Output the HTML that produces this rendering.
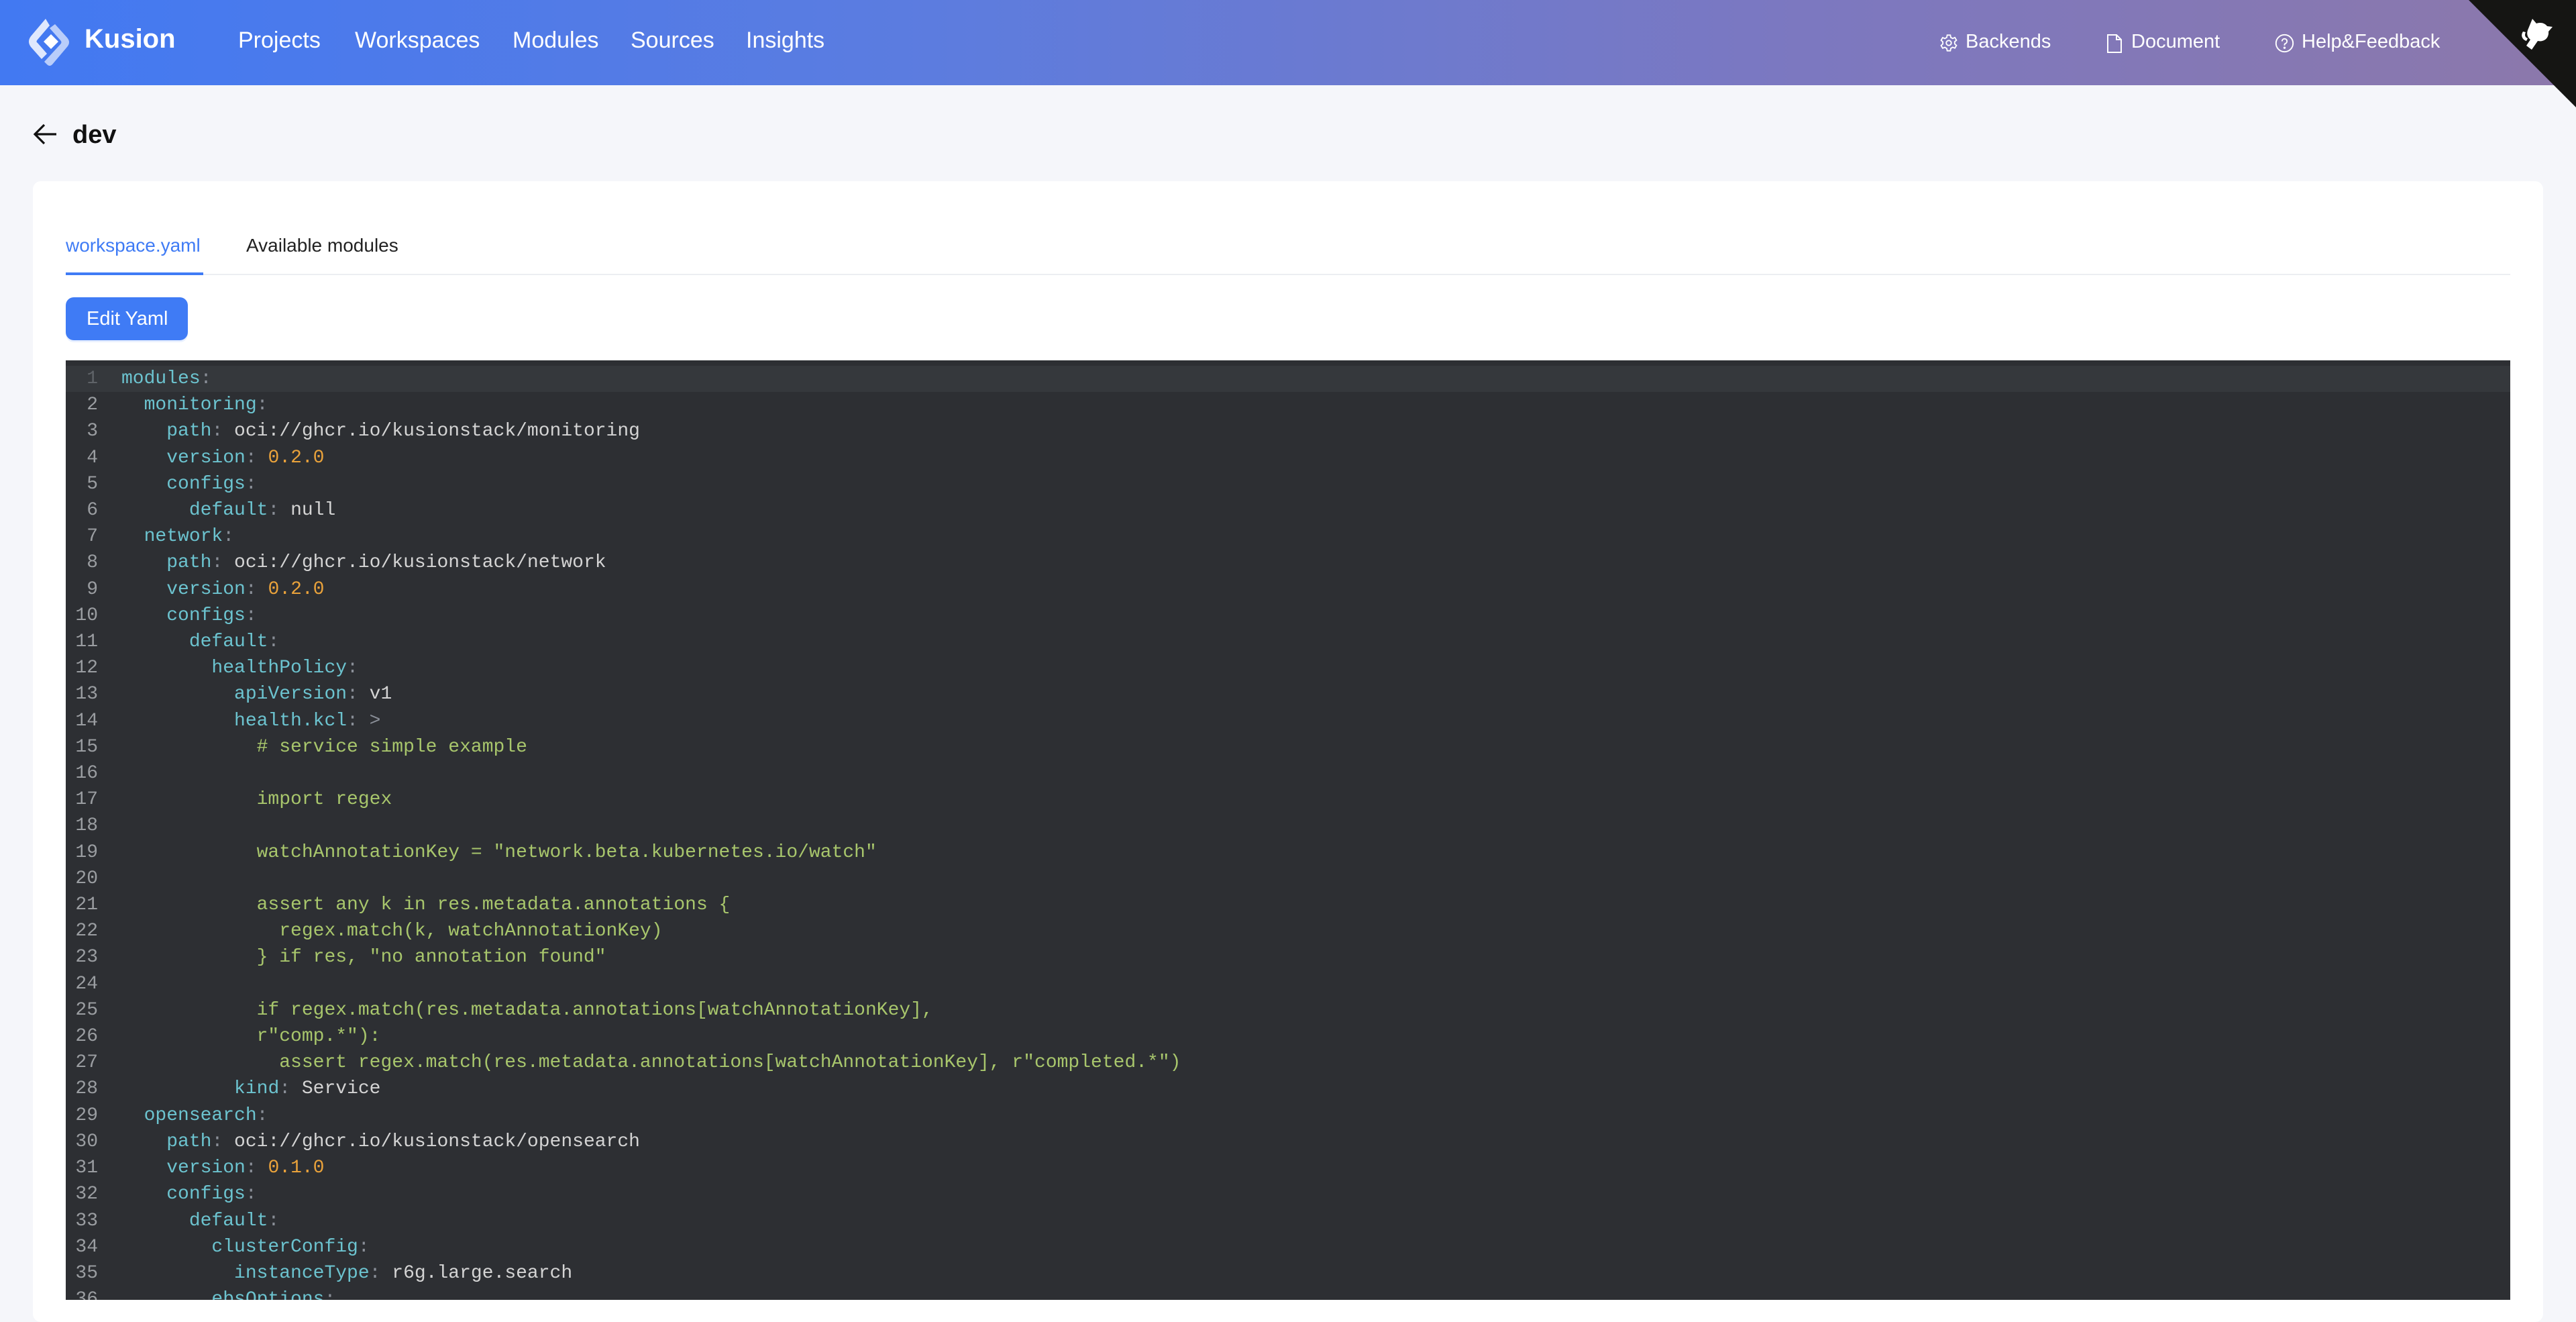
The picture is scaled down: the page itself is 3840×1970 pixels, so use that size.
<!DOCTYPE html>
<html><head><meta charset="utf-8"><style>
*{margin:0;padding:0;box-sizing:border-box}
body{width:3840px;height:1936px;overflow:hidden;background:#f5f6fa;font-family:"Liberation Sans",sans-serif;position:relative}
.hdr{position:absolute;left:0;top:0;width:3840px;height:127px;background:linear-gradient(90deg,#4279f2 0%,#5b7ce0 35%,#7c78c0 70%,#8c78ab 100%)}
.t{position:absolute;white-space:nowrap}
.nav{color:#fff;font-size:34px;top:41px}
.rn{color:#fff;font-size:29px;top:46px}
.gh{position:absolute;right:0;top:0;width:0;height:0;border-top:160px solid #151513;border-left:160px solid transparent}
.card{position:absolute;left:49px;top:270px;width:3742px;height:1700px;background:#fff;border-radius:12px}
.ed{position:absolute;left:98px;top:537px;width:3644px;height:1400px;background:#2d2f33;overflow:hidden}
.act{position:absolute;left:0;top:8px;width:100%;height:39px;background:#35383c}
.code{position:absolute;left:0;top:8px;font-family:"Liberation Mono",monospace;font-size:28px;line-height:39.2px;color:#d4d4d4;white-space:pre}
.ln{display:inline-block;width:48px;text-align:right;color:#9a9da1;margin-right:35px}
.k{color:#6cc3cf}.c{color:#8a8f98}.n{color:#e9a23b}.g{color:#a8c66c}
</style></head><body>
<div class="hdr"></div>
<svg style="position:absolute;left:38px;top:24px" width="76" height="78" viewBox="0 0 76 78">
<path d="M30 4 L8 30 Q2 38 8 46 L24 64 L32 56 L18 40 Q15 38 18 35 L36 14 Z" fill="#dfe8fd"/>
<path d="M44 12 L62 32 Q68 39 62 46 L40 72 Q36 76 32 72 L28 68 L52 42 Q55 39 52 36 L36 18 Z" fill="#b9cdfa"/>
<path d="M38 27 L49 38 L38 49 L27 38 Z" fill="#fff"/>
</svg>
<div class="t" style="left:126px;top:36px;color:#fff;font-size:40px;font-weight:bold">Kusion</div>
<div class="t nav" style="left:355px">Projects</div>
<div class="t nav" style="left:529px">Workspaces</div>
<div class="t nav" style="left:764px">Modules</div>
<div class="t nav" style="left:940px">Sources</div>
<div class="t nav" style="left:1112px">Insights</div>
<svg style="position:absolute;left:2891px;top:50px" width="28" height="28" viewBox="0 0 24 24" fill="none" stroke="#fff" stroke-width="1.6"><circle cx="12" cy="12" r="3.2"/><path d="M10 2h4l.6 3 2.4 1.3 2.8-1.2 2 3.4-2.3 2 .1 2.7 2.2 2-2 3.4-2.8-1.1-2.4 1.4L14 22h-4l-.6-3-2.4-1.4-2.8 1.1-2-3.4 2.2-2V10.6l-2.2-2 2-3.4 2.8 1.2L9.4 5z"/></svg>
<div class="t rn" style="left:2930px">Backends</div>
<svg style="position:absolute;left:3140px;top:50px" width="24" height="30" viewBox="0 0 24 30" fill="none" stroke="#fff" stroke-width="2"><path d="M2 2h13l7 7v19H2z M15 2v7h7"/></svg>
<div class="t rn" style="left:3177px">Document</div>
<svg style="position:absolute;left:3391px;top:50px" width="29" height="29" viewBox="0 0 24 24" fill="none" stroke="#fff" stroke-width="1.6"><circle cx="12" cy="12" r="10.5"/><path d="M9 9.5a3 3 0 1 1 4 2.8c-.8.4-1 1-1 1.8v.6"/><circle cx="12" cy="17.5" r=".6" fill="#fff"/></svg>
<div class="t rn" style="left:3431px">Help&amp;Feedback</div>
<div class="gh"></div>
<svg style="position:absolute;left:3755px;top:25px" width="60" height="60" viewBox="0 0 60 60"><path d="M20 3l6 7c6-2 12-1 16 4l8 1-6 7c1 10-7 16-16 14l-9 13-8-6 6-9c-4-3-6-8-4-14z M6 22c-4 6-1 12 5 14l2-4c-4-1-5-5-3-9z" fill="#fff"/></svg>
<svg style="position:absolute;left:48px;top:182px" width="40" height="36" viewBox="0 0 40 36" fill="none" stroke="#111" stroke-width="3.2"><path d="M36 18H5 M18 4L4 18l14 14"/></svg>
<div class="t" style="left:108px;top:180px;font-size:38px;color:#111;font-weight:bold">dev</div>
<div class="card"></div>
<div class="t" style="left:98px;top:350px;font-size:28px;color:#3f7bf5">workspace.yaml</div>
<div class="t" style="left:367px;top:350px;font-size:28px;color:#222">Available modules</div>
<div style="position:absolute;left:98px;top:408px;width:3644px;height:2px;background:#eceef2"></div>
<div style="position:absolute;left:98px;top:406px;width:205px;height:4px;background:#3f7bf5"></div>
<div style="position:absolute;left:98px;top:443px;width:182px;height:64px;background:#3f7bf5;border-radius:12px;box-shadow:0 3px 0 #e8f0ff"></div>
<div class="t" style="left:129px;top:459px;font-size:29px;color:#fff">Edit Yaml</div>
<div class="ed"><div class="act"></div><div class="code"><span class="ln" style="color:#5f6368">1</span><span class="k">modules</span><span class="c">:</span>
<span class="ln">2</span>  <span class="k">monitoring</span><span class="c">:</span>
<span class="ln">3</span>    <span class="k">path</span><span class="c">:</span> oci://ghcr.io/kusionstack/monitoring
<span class="ln">4</span>    <span class="k">version</span><span class="c">:</span> <span class="n">0.2.0</span>
<span class="ln">5</span>    <span class="k">configs</span><span class="c">:</span>
<span class="ln">6</span>      <span class="k">default</span><span class="c">:</span> null
<span class="ln">7</span>  <span class="k">network</span><span class="c">:</span>
<span class="ln">8</span>    <span class="k">path</span><span class="c">:</span> oci://ghcr.io/kusionstack/network
<span class="ln">9</span>    <span class="k">version</span><span class="c">:</span> <span class="n">0.2.0</span>
<span class="ln">10</span>    <span class="k">configs</span><span class="c">:</span>
<span class="ln">11</span>      <span class="k">default</span><span class="c">:</span>
<span class="ln">12</span>        <span class="k">healthPolicy</span><span class="c">:</span>
<span class="ln">13</span>          <span class="k">apiVersion</span><span class="c">:</span> v1
<span class="ln">14</span>          <span class="k">health.kcl</span><span class="c">: &gt;</span>
<span class="ln">15</span><span class="g">            # service simple example</span>
<span class="ln">16</span>
<span class="ln">17</span><span class="g">            import regex</span>
<span class="ln">18</span>
<span class="ln">19</span><span class="g">            watchAnnotationKey = "network.beta.kubernetes.io/watch"</span>
<span class="ln">20</span>
<span class="ln">21</span><span class="g">            assert any k in res.metadata.annotations {</span>
<span class="ln">22</span><span class="g">              regex.match(k, watchAnnotationKey)</span>
<span class="ln">23</span><span class="g">            } if res, "no annotation found"</span>
<span class="ln">24</span>
<span class="ln">25</span><span class="g">            if regex.match(res.metadata.annotations[watchAnnotationKey],</span>
<span class="ln">26</span><span class="g">            r"comp.*"):</span>
<span class="ln">27</span><span class="g">              assert regex.match(res.metadata.annotations[watchAnnotationKey], r"completed.*")</span>
<span class="ln">28</span>          <span class="k">kind</span><span class="c">:</span> Service
<span class="ln">29</span>  <span class="k">opensearch</span><span class="c">:</span>
<span class="ln">30</span>    <span class="k">path</span><span class="c">:</span> oci://ghcr.io/kusionstack/opensearch
<span class="ln">31</span>    <span class="k">version</span><span class="c">:</span> <span class="n">0.1.0</span>
<span class="ln">32</span>    <span class="k">configs</span><span class="c">:</span>
<span class="ln">33</span>      <span class="k">default</span><span class="c">:</span>
<span class="ln">34</span>        <span class="k">clusterConfig</span><span class="c">:</span>
<span class="ln">35</span>          <span class="k">instanceType</span><span class="c">:</span> r6g.large.search
<span class="ln">36</span>        <span class="k">ebsOptions</span><span class="c">:</span>
</div></div>
</body></html>
